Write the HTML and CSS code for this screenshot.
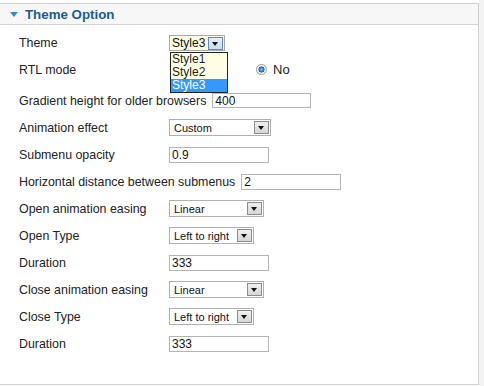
FILE: index.html
```html
<!DOCTYPE html>
<html lang="en">
<head>
    <meta charset="UTF-8">
    <title>Theme Option</title>
    <link rel="stylesheet" href="styles.css">
</head>
<body>

    <div class="page">
        <div class="panel">
            <h3 class="panel-title"><span class="caret"></span>Theme Option</h3>

            <div class="fields">
                <div class="row">
                    <span class="label">Theme</span>
                    <div class="picker">
                        <div class="select select-theme"><span>Style3</span><i class="arrow arrow-blue"></i></div>
                        <ul class="dropdown">
                            <li>Style1</li>
                            <li>Style2</li>
                            <li class="active">Style3</li>
                        </ul>
                    </div>
                </div>

                <div class="row">
                    <span class="label">RTL mode</span>
                    <span class="radio checked radio-no"></span><span class="radio-text">No</span>
                </div>

                <div class="row row-gap">
                    <span class="label">Gradient height for older browsers</span>
                    <input class="text text-short" type="text" value="400">
                </div>

                <div class="row">
                    <span class="label">Animation effect</span>
                    <div class="select w-wide"><span>Custom</span><i class="arrow"></i></div>
                </div>

                <div class="row">
                    <span class="label">Submenu opacity</span>
                    <input class="text" type="text" value="0.9">
                </div>

                <div class="row">
                    <span class="label">Horizontal distance between submenus</span>
                    <input class="text" type="text" value="2">
                </div>

                <div class="row">
                    <span class="label">Open animation easing</span>
                    <div class="select w-mid"><span>Linear</span><i class="arrow"></i></div>
                </div>

                <div class="row">
                    <span class="label">Open Type</span>
                    <div class="select w-small"><span>Left to right</span><i class="arrow"></i></div>
                </div>

                <div class="row">
                    <span class="label">Duration</span>
                    <input class="text" type="text" value="333">
                </div>

                <div class="row">
                    <span class="label">Close animation easing</span>
                    <div class="select w-mid"><span>Linear</span><i class="arrow"></i></div>
                </div>

                <div class="row">
                    <span class="label">Close Type</span>
                    <div class="select w-small"><span>Left to right</span><i class="arrow"></i></div>
                </div>

                <div class="row">
                    <span class="label">Duration</span>
                    <input class="text" type="text" value="333">
                </div>
            </div>
        </div>
        <div class="side"></div>
    </div>

</body>
</html>
```

FILE: styles.css
```css
body {
    margin: 0;
    background-color: #fff;
    font-family: "Liberation Sans", Arial, sans-serif;
    font-size: 12.4px;
    color: #222;
}

.page {
    display: flex;
    height: 386px;
}

.panel {
    width: 478px;
    height: 380px;
    margin-top: 3px;
    border-top: 1px solid #cfcfcf;
    border-right: 1px solid #cfcfcf;
    border-bottom: 1px solid #cfcfcf;
}

.side {
    flex: 1;
    background-color: #f3f3f3;
}

.panel-title {
    display: flex;
    align-items: center;
    height: 20px;
    margin: 0;
    padding-left: 10px;
    background-color: #f7f7f7;
    border-bottom: 1px solid #d2d2d2;
    color: #1b5c8e;
    font-size: 13.3px;
    font-weight: 700;
}

.caret {
    width: 0;
    height: 0;
    margin: 1px 7px 0 0;
    border-left: 4px solid transparent;
    border-right: 4px solid transparent;
    border-top: 5px solid #2f8ecf;
}

.fields {
    padding: 4px 0 0 19px;
}

.row {
    display: flex;
    align-items: center;
    height: 27px;
}

.row-gap {
    margin-top: 4px;
}

.label {
    min-width: 150px;
    padding-right: 6px;
    box-sizing: border-box;
    white-space: nowrap;
}

.text {
    width: 100px;
    height: 16px;
    margin: 0;
    padding: 0 2px;
    box-sizing: border-box;
    border: 1px solid #b4b4b4;
    font-family: "Liberation Sans", Arial, sans-serif;
    font-size: 12px;
    color: #111;
    outline: none;
}

.text-short {
    width: 99px;
    height: 15px;
}

.select {
    position: relative;
    display: flex;
    align-items: center;
    height: 17px;
    padding-left: 4px;
    box-sizing: border-box;
    border: 1px solid #b0b0b0;
    background-color: #fff;
    font-size: 11px;
    color: #111;
}

.w-wide { width: 102px; }
.w-mid { width: 95px; }
.w-small { width: 85px; }

.arrow {
    position: absolute;
    right: 1px;
    top: 1px;
    width: 15px;
    height: 13px;
    box-sizing: border-box;
    border: 1px solid #8c8c8c;
    background: linear-gradient(#f0f0f0, #d6d6d6);
}

.arrow::after {
    content: "";
    position: absolute;
    left: 3px;
    top: 4px;
    border-left: 3.5px solid transparent;
    border-right: 3.5px solid transparent;
    border-top: 4px solid #111;
}

.picker {
    position: relative;
}

.select-theme {
    width: 56px;
    height: 16px;
    padding-left: 2px;
    background-color: #fffde4;
    border-color: #a8a8a8;
    font-size: 12px;
}

.arrow-blue {
    border-color: #5a8cc2;
    background: linear-gradient(#e6f0fb, #c9ddf3);
}

.dropdown {
    position: absolute;
    top: 17px;
    left: 1px;
    width: 56px;
    margin: 0;
    padding: 0;
    list-style: none;
    border: 1px solid #222;
    background-color: #ffffe4;
    font-size: 12px;
    z-index: 2;
}

.dropdown li {
    height: 13px;
    line-height: 13px;
    padding-left: 1px;
}

.dropdown .active {
    background-color: #3399ff;
    color: #fff;
}

.radio {
    width: 11px;
    height: 11px;
    box-sizing: border-box;
    border: 1px solid #9a9a9a;
    border-radius: 50%;
}

.radio.checked {
    background: radial-gradient(circle, #7fd0ff 0, #1f78c8 35%, #2a5f96 45%, #fff 52%, #e4e4e4);
}

.radio-no {
    margin-left: 87px;
}

.radio-text {
    margin-left: 6px;
    font-size: 13px;
}
```
